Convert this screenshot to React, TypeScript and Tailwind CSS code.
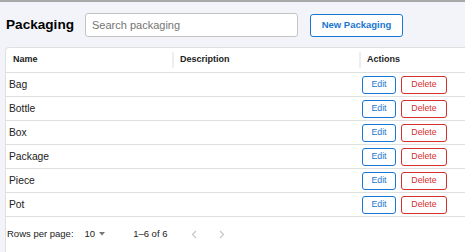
import React from "react";

const rows = ["Bag", "Bottle", "Box", "Package", "Piece", "Pot"];

export default function App() {
  return (
    <div
      className="w-[465px] h-[252px] overflow-hidden bg-[#f3f4f9] border-t-2 border-[#a8a8a8] text-[#222]"
      style={{ fontFamily: '"Liberation Sans", Arial, sans-serif' }}
    >
      {/* Toolbar */}
      <div className="flex items-center pl-[6px] pt-[11px]">
        <h1 className="text-[13.6px] font-bold text-black leading-none">Packaging</h1>
        <input
          type="text"
          placeholder="Search packaging"
          className="ml-[11px] w-[213px] h-[24px] rounded-[3px] border border-[#c4c4c4] bg-white px-[6px] text-[11px] placeholder:text-[#757575] focus:outline-none"
        />
        <button className="ml-[12px] w-[93px] h-[23px] rounded-[3px] border border-[#1976d2] bg-white text-[9.5px] font-bold text-[#1976d2]">
          New Packaging
        </button>
      </div>

      {/* Table card */}
      <div className="mt-[10px] ml-[5px] w-[480px] h-[220px] bg-white border-l border-t border-[#e0e0e0] rounded-tl-[4px]">
        {/* Header */}
        <div className="grid grid-cols-[166px_187px_1fr] h-[25px] border-b border-[#e0e0e0] text-[9px] font-bold">
          <div className="flex items-center pl-[7px]">Name</div>
          <div className="flex items-center">
            <div className="w-[2px] h-[16px] bg-[#eeeeee]" />
            <span className="pl-[6px]">Description</span>
          </div>
          <div className="flex items-center">
            <div className="w-[2px] h-[16px] bg-[#eeeeee]" />
            <span className="pl-[6px]">Actions</span>
          </div>
        </div>

        {/* Rows */}
        {rows.map((name) => (
          <div
            key={name}
            className="grid grid-cols-[166px_187px_1fr] h-[24px] border-b border-[#e0e0e0] text-[10.3px]"
          >
            <div className="flex items-center pl-[3px]">{name}</div>
            <div />
            <div className="flex items-center gap-[5px] pl-[3px]">
              <button className="w-[34px] h-[18px] rounded-[3px] border border-[#1976d2] text-[8.8px] text-[#1976d2]">
                Edit
              </button>
              <button className="w-[46px] h-[18px] rounded-[3px] border border-[#d32f2f] text-[8.8px] text-[#d32f2f]">
                Delete
              </button>
            </div>
          </div>
        ))}

        {/* Footer */}
        <div className="flex items-center h-[34px] pl-[1px] text-[9.5px]">
          <span>Rows per page:</span>
          <span className="ml-[11px]">10</span>
          <svg width="6" height="4" viewBox="0 0 6 4" className="ml-[4px]">
            <path d="M0 0 L6 0 L3 3.5 Z" fill="#757575" />
          </svg>
          <span className="ml-[28px]">1–6 of 6</span>
          <svg width="6" height="9" viewBox="0 0 6 9" className="ml-[24px]">
            <polyline points="5,1 1.5,4.5 5,8" fill="none" stroke="#c8c8c8" strokeWidth="1.2" />
          </svg>
          <svg width="6" height="9" viewBox="0 0 6 9" className="ml-[22px]">
            <polyline points="1,1 4.5,4.5 1,8" fill="none" stroke="#c8c8c8" strokeWidth="1.2" />
          </svg>
        </div>
      </div>
    </div>
  );
}
